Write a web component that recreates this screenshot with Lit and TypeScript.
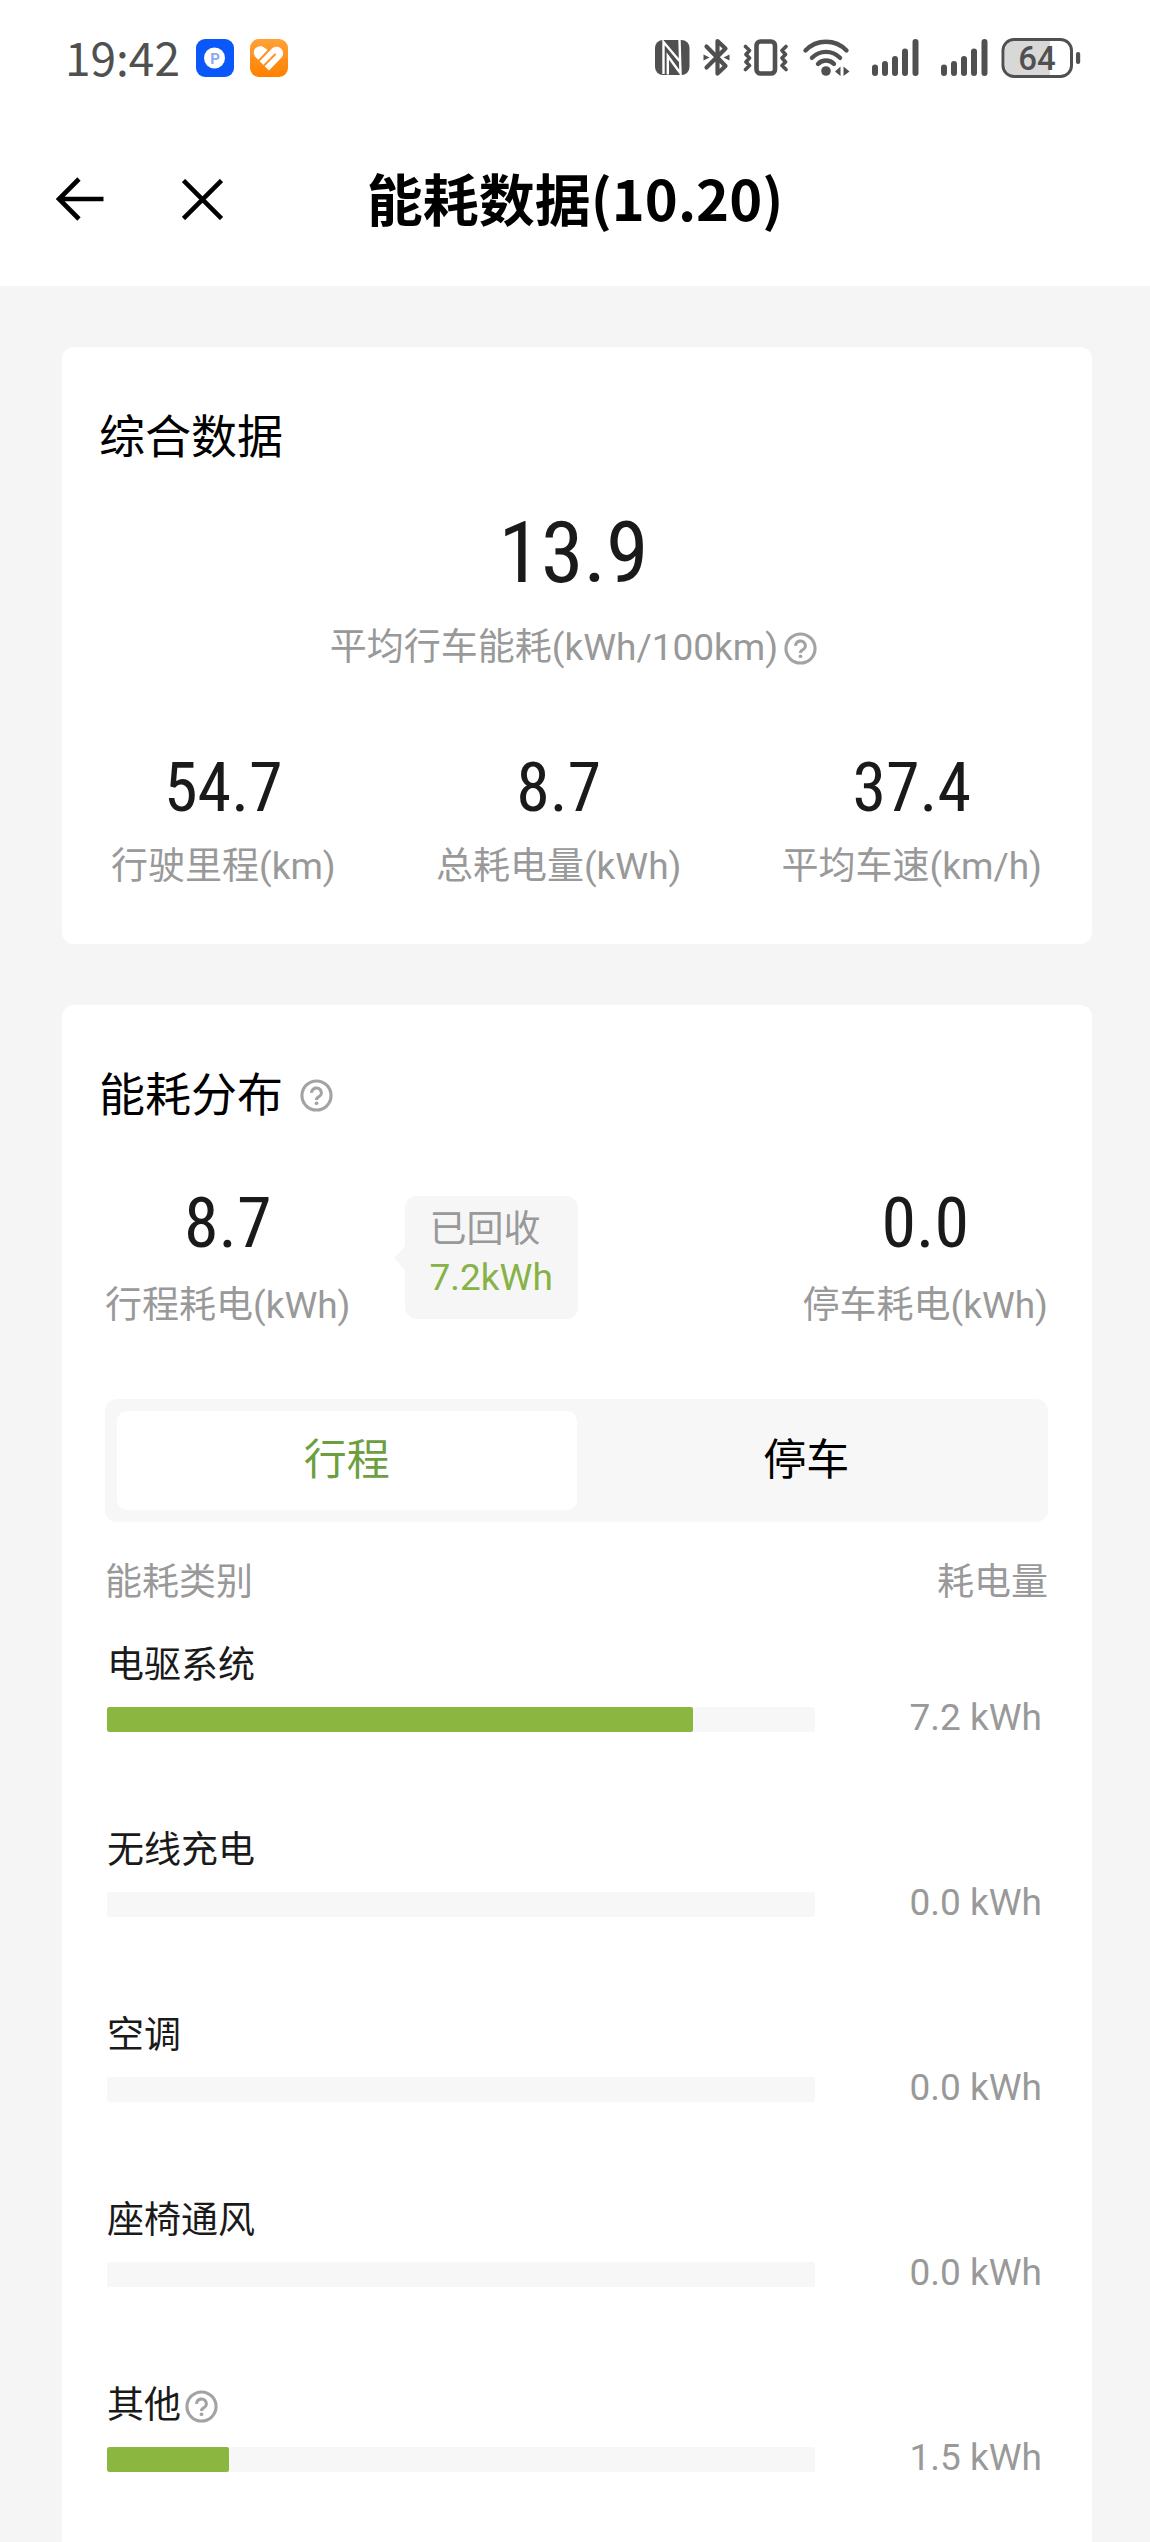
import { LitElement, html, css } from "lit";
import { customElement, state } from "lit/decorators.js";
import { classMap } from "lit/directives/class-map.js";

interface Usage {
  label: string;
  kwh: number;
  help?: boolean;
}

type Mode = "trip" | "park";

const TOTAL: Record<Mode, number> = { trip: 8.7, park: 0 };

const USAGE: Record<Mode, Usage[]> = {
  trip: [
    { label: "电驱系统", kwh: 7.2 },
    { label: "无线充电", kwh: 0 },
    { label: "空调", kwh: 0 },
    { label: "座椅通风", kwh: 0 },
    { label: "其他", kwh: 1.5, help: true },
  ],
  park: [
    { label: "空调", kwh: 0 },
    { label: "其他", kwh: 0, help: true },
  ],
};

@customElement("status-bar")
export class StatusBar extends LitElement {
  static styles = css`
    :host {
      display: flex;
      align-items: center;
      justify-content: space-between;
      height: 116px;
      padding: 0 69px 0 65px;
      color: #505050;
      font-family: "Noto Sans CJK SC", sans-serif;
    }
    .left,
    .right {
      display: flex;
      align-items: center;
    }
    .left {
      gap: 16px;
    }
    .right {
      gap: 13px;
    }
    .time {
      padding-bottom: 4px;
      font-size: 46px;
      line-height: 46px;
    }
    .signal {
      margin-left: 9px;
    }
    svg {
      display: block;
      flex: none;
      overflow: visible;
    }
    .level {
      font-family: Roboto, sans-serif;
      font-size: 33px;
      font-weight: 500;
    }
    .badge {
      font-family: Roboto, sans-serif;
      font-size: 15px;
      font-weight: 700;
    }
  `;

  private signal() {
    return html`<svg class="signal" width="47" height="40" viewBox="0 0 47 40" aria-hidden="true">
      <path
        d="M3 29.5V35M13 26V35M23 21V35M33 13.5V35M43.5 4V35"
        fill="none"
        stroke="currentColor"
        stroke-width="6"
        stroke-linecap="round"
      />
    </svg>`;
  }

  render() {
    return html`
      <div class="left">
        <span class="time">19:42</span>
        <svg width="38" height="38" viewBox="0 0 38 38" aria-hidden="true">
          <rect width="38" height="38" rx="9" fill="#0a57fa" />
          <circle cx="18.5" cy="19" r="10.5" fill="#fff" />
          <text class="badge" x="19" y="24.5" text-anchor="middle" fill="#8ea8f2">P</text>
        </svg>
        <svg width="38" height="38" viewBox="0 0 38 38" aria-hidden="true">
          <defs>
            <linearGradient id="warm" x1="0" y1="0" x2="0" y2="1">
              <stop offset="0" stop-color="#ffa238" />
              <stop offset="1" stop-color="#ff8000" />
            </linearGradient>
          </defs>
          <rect width="38" height="38" rx="9" fill="url(#warm)" />
          <path
            d="M19 31.5 6 18.5A6.3 6.3 0 0 1 14.5 8.7L18.5 11.5 23 8.7A6.6 6.6 0 0 1 31.5 18.6Z"
            fill="#fff"
          />
          <path
            d="M8 22.5 20.5 9.5M14.5 26 25 15.5"
            fill="none"
            stroke="#ff9220"
            stroke-width="2"
            stroke-linecap="round"
          />
        </svg>
      </div>
      <div class="right">
        <svg width="35" height="40" viewBox="0 0 35 40" aria-hidden="true">
          <rect x="0" y="2" width="34.5" height="35" rx="8" fill="currentColor" />
          <path
            d="M8.5 36V4L24.5 23M24.5 2 25.5 35.5 12.8 18V36.5"
            fill="none"
            stroke="#fff"
            stroke-width="2.4"
          />
        </svg>
        <svg width="27" height="40" viewBox="0 0 27 40" aria-hidden="true">
          <path
            d="M3.5 8.5 22.5 28 14.5 35.5V3L22.5 10.5 3.5 29.5"
            fill="none"
            stroke="currentColor"
            stroke-width="4.2"
            stroke-linejoin="round"
            stroke-linecap="round"
          />
          <path d="M0.5 16.5V22.5L6.5 19.5ZM26.5 16.5V22.5L20.5 19.5Z" fill="currentColor" />
        </svg>
        <svg width="46" height="40" viewBox="0 0 46 40" aria-hidden="true">
          <g fill="none" stroke="currentColor" stroke-linejoin="round" stroke-linecap="round">
            <rect x="13.5" y="3.5" width="18.5" height="32" rx="4" stroke-width="4.6" />
            <path
              d="M2.5 8.5 6.5 12.5 3 16.5 6.5 20 3 24 6.5 27.5 2.5 31.5M43 8.5 39 12.5 42.5 16.5 39 20 42.5 24 39 27.5 43 31.5"
              stroke-width="3.6"
            />
          </g>
        </svg>
        <svg width="48" height="40" viewBox="0 0 48 40" aria-hidden="true">
          <path
            d="M3.5 12.5A28.5 28.5 0 0 1 44.5 12.5M10 19.8A19.5 19.5 0 0 1 38 19.8M16 26A11 11 0 0 1 32 26"
            fill="none"
            stroke="currentColor"
            stroke-width="4.4"
            stroke-linecap="round"
          />
          <circle cx="24" cy="33" r="4.8" fill="currentColor" />
          <path d="M33 33.5 38.5 28.5V38ZM41.5 28.5V38L47.5 33.5Z" fill="currentColor" />
        </svg>
        ${this.signal()}${this.signal()}
        <svg width="80" height="40" viewBox="0 0 80 40" role="img" aria-label="64%">
          <rect x="4" y="3" width="45" height="34" rx="9" fill="#d8d8d8" />
          <rect x="40" y="3" width="9" height="34" fill="#d8d8d8" />
          <rect x="2" y="1.5" width="68.5" height="37" rx="11" fill="none" stroke="currentColor" stroke-width="3" />
          <rect x="75" y="14" width="4.2" height="12" rx="2" fill="currentColor" />
          <text class="level" x="36" y="32" text-anchor="middle" fill="currentColor">64</text>
        </svg>
      </div>
    `;
  }
}

@customElement("app-root")
export class AppRoot extends LitElement {
  static styles = css`
    :host {
      display: flex;
      flex-direction: column;
      min-height: 100vh;
      background: #f5f5f5;
      color: #000;
      font-family: Roboto, "Noto Sans CJK SC", sans-serif;
      font-size: 37px;
      line-height: 48px;
    }
    * {
      box-sizing: border-box;
    }
    button {
      margin: 0;
      padding: 0;
      border: 0;
      background: none;
      color: inherit;
      font: inherit;
      cursor: pointer;
    }
    svg {
      display: block;
    }
    h1,
    h2,
    p,
    dl,
    dd {
      margin: 0;
      font-weight: 400;
    }
    .top {
      background: #fff;
    }
    .nav {
      display: grid;
      grid-template-columns: 1fr auto 1fr;
      align-items: center;
      height: 170px;
      padding: 0 56px 4px;
    }
    .actions {
      display: flex;
      align-items: center;
      gap: 78px;
    }
    .title {
      padding-bottom: 4px;
      font-family: "Noto Sans CJK SC", sans-serif;
      font-size: 56px;
      line-height: 72px;
      font-weight: 700;
    }
    main {
      flex: 1;
      display: flex;
      flex-direction: column;
      gap: 61px;
      padding: 61px 58px 0 62px;
    }
    .card {
      padding: 60px 44px 53px 37px;
      border-radius: 12px;
      background: #fff;
    }
    .grow {
      flex: 1;
      padding-bottom: 0;
      border-radius: 12px 12px 0 0;
    }
    .head {
      display: flex;
      align-items: center;
      gap: 17px;
    }
    h2 {
      font-size: 46px;
      line-height: 60px;
    }
    .help {
      flex: none;
      color: #a3a3a3;
    }
    .inner {
      padding-left: 6px;
    }
    .muted,
    dt {
      color: #999;
    }
    .hero {
      display: flex;
      flex-direction: column;
      align-items: center;
      gap: 21px;
      padding-top: 36px;
    }
    .num {
      color: #1a1a1a;
      font-family: "Roboto Condensed", Roboto, sans-serif;
      font-size: 68px;
      line-height: 72px;
    }
    .hero .num {
      font-size: 86px;
      line-height: 100px;
    }
    .caption {
      display: flex;
      align-items: center;
      gap: 6px;
    }
    .stats {
      display: flex;
      justify-content: space-between;
      padding: 80px 6px 0 12px;
    }
    .stat {
      display: flex;
      flex-direction: column-reverse;
      align-items: center;
      gap: 19px;
    }
    .split {
      display: flex;
      align-items: flex-start;
      padding-top: 62px;
    }
    .split .stat {
      gap: 23px;
    }
    .split .num {
      font-size: 70px;
    }
    .split .stat:last-child {
      margin-left: auto;
    }
    .tip {
      position: relative;
      margin: 9px 0 0 54px;
      padding: 10px 25px 17px;
      border-radius: 12px;
      background: #f6f6f6;
    }
    .tip::before {
      content: "";
      position: absolute;
      left: -11px;
      top: 50px;
      border: solid transparent;
      border-width: 12px 11px 12px 0;
      border-right-color: #f6f6f6;
    }
    .green {
      color: #86b248;
    }
    .tabs {
      display: grid;
      grid-template-columns: 1fr 1fr;
      margin-top: 69px;
      padding: 12px;
      border-radius: 12px;
      background: #f7f7f7;
    }
    .tab {
      height: 99px;
      padding-bottom: 2px;
      border-radius: 10px;
      font-size: 43px;
    }
    .tab.on {
      background: #fff;
      color: #6d9f40;
    }
    table {
      width: 100%;
      margin-top: 37px;
      border-collapse: collapse;
      table-layout: fixed;
    }
    th,
    td {
      padding: 0;
      font-weight: 400;
      text-align: left;
      vertical-align: top;
    }
    thead th {
      padding-bottom: 35px;
      color: #999;
    }
    .amount {
      width: 233px;
      text-align: right;
    }
    tbody th {
      padding: 0 0 95px 2px;
      color: #1a1a1a;
    }
    tbody .amount {
      padding: 52px 6px 0 0;
      color: #999;
    }
    tbody tr:last-child th {
      padding-bottom: 0;
    }
    .label {
      display: flex;
      align-items: center;
      gap: 4px;
    }
    .track {
      height: 25px;
      margin-top: 17px;
      border-radius: 2px;
      background: #f7f7f7;
      overflow: hidden;
    }
    .fill {
      height: 100%;
      border-radius: 2px;
      background: #8bb741;
    }
  `;

  @state() private mode: Mode = "trip";

  private help(label: string) {
    return html`<button class="help" type="button" aria-label=${label}>
      <svg width="33" height="33" viewBox="0 0 34 34" aria-hidden="true">
        <circle cx="17" cy="17" r="15" fill="none" stroke="currentColor" stroke-width="3.2" />
        <path
          d="M12 14.4A5 4.8 0 1 1 19.2 18.4C17.6 19.2 17 19.8 17 21.6"
          fill="none"
          stroke="currentColor"
          stroke-width="3.2"
        />
        <circle cx="17" cy="25" r="1.9" fill="currentColor" />
      </svg>
    </button>`;
  }

  private stat(value: string, label: string) {
    return html`<div class="stat">
      <dt>${label}</dt>
      <dd class="num">${value}</dd>
    </div>`;
  }

  private tab(mode: Mode, text: string) {
    const on = this.mode === mode;
    return html`<button
      type="button"
      role="tab"
      class=${classMap({ tab: true, on })}
      aria-selected=${on ? "true" : "false"}
      @click=${() => (this.mode = mode)}
    >
      ${text}
    </button>`;
  }

  private row(item: Usage) {
    const total = TOTAL[this.mode];
    const share = total ? (item.kwh / total) * 100 : 0;
    return html`<tr>
      <th scope="row">
        <div class="label">${item.label}${item.help ? this.help("其他说明") : null}</div>
        <div class="track"><div class="fill" style="width:${share}%"></div></div>
      </th>
      <td class="amount">${item.kwh.toFixed(1)} kWh</td>
    </tr>`;
  }

  render() {
    return html`
      <header class="top">
        <status-bar></status-bar>
        <nav class="nav">
          <div class="actions">
            <button type="button" aria-label="返回">
              <svg width="48" height="44" viewBox="0 0 48 44" fill="none" stroke="currentColor" stroke-width="4.6">
                <path d="M3 22H47.5M23 2 3 22 23 42" />
              </svg>
            </button>
            <button type="button" aria-label="关闭">
              <svg width="41" height="41" viewBox="0 0 41 41" fill="none" stroke="currentColor" stroke-width="4.6">
                <path d="M1.5 1.5 39.5 39.5M39.5 1.5 1.5 39.5" />
              </svg>
            </button>
          </div>
          <h1 class="title">能耗数据(10.20)</h1>
        </nav>
      </header>
      <main>
        <section class="card">
          <div class="head"><h2>综合数据</h2></div>
          <div class="hero">
            <div class="num">13.9</div>
            <div class="caption muted">
              <span>平均行车能耗(kWh/100km)</span>${this.help("平均行车能耗说明")}
            </div>
          </div>
          <dl class="stats">
            ${this.stat("54.7", "行驶里程(km)")} ${this.stat("8.7", "总耗电量(kWh)")}
            ${this.stat("37.4", "平均车速(km/h)")}
          </dl>
        </section>
        <section class="card grow">
          <div class="head">
            <h2>能耗分布</h2>
            ${this.help("能耗分布说明")}
          </div>
          <div class="inner">
            <div class="split">
              ${this.stat("8.7", "行程耗电(kWh)")}
              <div class="tip">
                <p class="muted">已回收</p>
                <p class="green">7.2kWh</p>
              </div>
              ${this.stat("0.0", "停车耗电(kWh)")}
            </div>
            <div class="tabs" role="tablist">${this.tab("trip", "行程")}${this.tab("park", "停车")}</div>
            <table>
              <thead>
                <tr>
                  <th scope="col">能耗类别</th>
                  <th scope="col" class="amount">耗电量</th>
                </tr>
              </thead>
              <tbody>
                ${USAGE[this.mode].map((item) => this.row(item))}
              </tbody>
            </table>
          </div>
        </section>
      </main>
    `;
  }
}
